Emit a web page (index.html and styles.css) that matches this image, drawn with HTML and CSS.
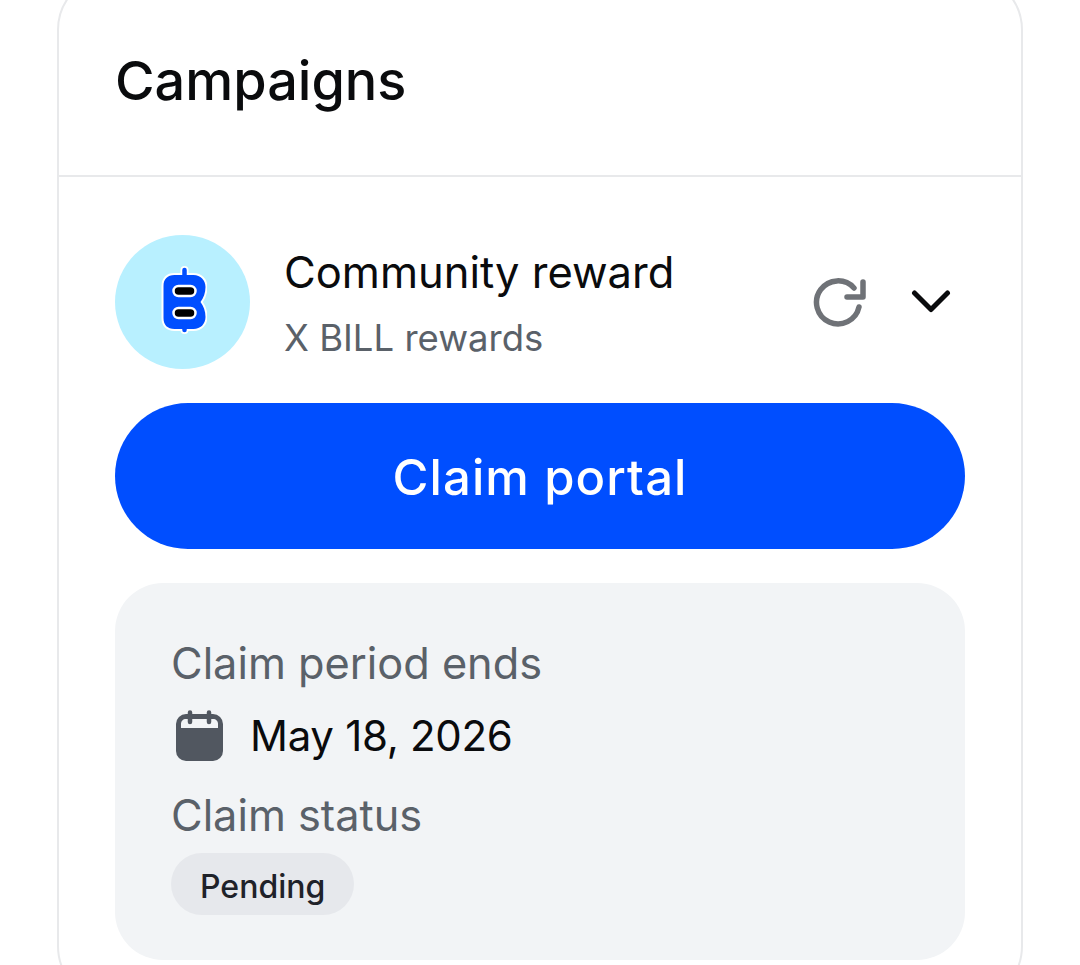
FILE: index.html
```html
<!DOCTYPE html>
<html>
  <head>
    <title>Campaigns</title>
    <link rel="stylesheet" href="styles.css">
  </head>
  <body>
    <div class="card">
      <div class="card-head">
        <h1 class="card-title">Campaigns</h1>
      </div>
      <div class="card-body">
        <div class="campaign">
          <div class="token">
            <svg width="48" height="72" viewBox="-1.5 0 48 72">
              <path d="M24 4v60" stroke="#fff" stroke-width="8" stroke-linecap="round"/>
              <path d="M14 9H33C40 9 45 14 45 21C45 27 43 32 40 36C43 40 45 45 45 51C45 58 40 63 33 63H14C7 63 3 59 3 52V20C3 13 7 9 14 9Z" fill="#004eff" stroke="#fff" stroke-width="4" paint-order="stroke"/>
              <path d="M24 4v60" stroke="#004eff" stroke-width="4.5" stroke-linecap="round"/>
              <rect x="13" y="20" width="22" height="10" rx="5" fill="#000" stroke="#fff" stroke-width="2.5"/>
              <rect x="13" y="42" width="22" height="10" rx="5" fill="#000" stroke="#fff" stroke-width="2.5"/>
            </svg>
          </div>
          <div class="campaign-text">
            <div class="campaign-name">Community reward</div>
            <div class="campaign-sub">X BILL rewards</div>
          </div>
          <div class="campaign-actions">
            <svg width="54" height="50" viewBox="0 0 54 50" fill="none">
              <path d="M46 30A21.5 21.5 0 1 1 41 11" stroke="#6f7277" stroke-width="5.5" stroke-linecap="round"/>
              <path d="M50 5V20H34" stroke="#6f7277" stroke-width="5.5" stroke-linecap="round" stroke-linejoin="round"/>
            </svg>
            <svg width="40" height="26" viewBox="0 0 40 26" fill="none">
              <path d="M3.5 4l16.5 16.5L36.5 4" stroke="#0a0b0d" stroke-width="5" stroke-linecap="round" stroke-linejoin="round"/>
            </svg>
          </div>
        </div>
        <button class="claim-btn">Claim portal</button>
        <div class="info">
          <div class="info-label">Claim period ends</div>
          <div class="info-date">
            <svg class="cal" width="52" height="52" viewBox="0 0 52 52">
              <rect x="4" y="4" width="47" height="47" rx="10" fill="#515760"/>
              <path d="M9 18V14C9 11 11 9 14 9H41C44 9 46 11 46 14V18Z" fill="#f2f4f6"/>
              <path d="M18 2.5V12M37 2.5V12" stroke="#515760" stroke-width="4.5" stroke-linecap="round"/>
            </svg>
            <span>May 18, 2026</span>
          </div>
          <div class="info-label">Claim status</div>
          <span class="pill">Pending</span>
        </div>
      </div>
    </div>
  </body>
</html>
```

FILE: styles.css
```css
html, body {
    margin: 0;
    padding: 0;
    height: 965px;
    overflow: hidden;
    background: #fff;
}

body {
    font-family: Inter, "Liberation Sans", sans-serif;
    color: #0a0b0d;
}

.card {
    width: 966px;
    box-sizing: border-box;
    margin: -26px 0 0 57px;
    border: 2px solid #e8e9eb;
    border-radius: 56px;
}

.card-head {
    height: 201px;
    box-sizing: border-box;
    padding: 10px 56px 0;
    display: flex;
    align-items: center;
    border-bottom: 2px solid #e8e9eb;
}

.card-title {
    margin: 0;
    font-size: 54px;
    font-weight: 500;
}

.card-body {
    padding: 58px 56px 40px;
}

.campaign {
    display: flex;
    align-items: center;
    height: 134px;
}

.token {
    width: 135px;
    height: 134px;
    border-radius: 50%;
    background: #b8f0ff;
    display: flex;
    align-items: center;
    justify-content: center;
    flex-shrink: 0;
}

.campaign-text {
    margin-left: 34px;
    padding-top: 2px;
    flex: 1;
}

.campaign-name {
    font-size: 43.5px;
    line-height: 52px;
}

.campaign-sub {
    margin-top: 18px;
    font-size: 36.5px;
    line-height: 44px;
    color: #5a6169;
}

.campaign-actions {
    display: flex;
    align-items: center;
    gap: 44px;
    margin-right: 14px;
}

.claim-btn {
    display: block;
    width: 100%;
    height: 146px;
    margin-top: 34px;
    padding: 2px 0 0;
    border: 0;
    border-radius: 73px;
    background: #004eff;
    color: #fff;
    font-family: inherit;
    font-size: 49px;
    font-weight: 500;
    letter-spacing: 1.1px;
}

.info {
    margin-top: 34px;
    height: 377px;
    box-sizing: border-box;
    padding: 55px 56px 0;
    border-radius: 48px;
    background: #f2f4f6;
}

.info-label {
    font-size: 43.3px;
    line-height: 50px;
    color: #5a6169;
}

.info-date {
    display: flex;
    align-items: center;
    gap: 26px;
    margin: 19px 0 25px;
    font-size: 42px;
    line-height: 58px;
    letter-spacing: -0.3px;
}

.cal {
    margin-left: 1px;
}

.pill {
    display: inline-block;
    margin-top: 13px;
    padding: 0 29px;
    height: 62px;
    line-height: 67px;
    border-radius: 31px;
    background: #e6e8ec;
    color: #1f2229;
    font-size: 32px;
    font-weight: 500;
}
```
